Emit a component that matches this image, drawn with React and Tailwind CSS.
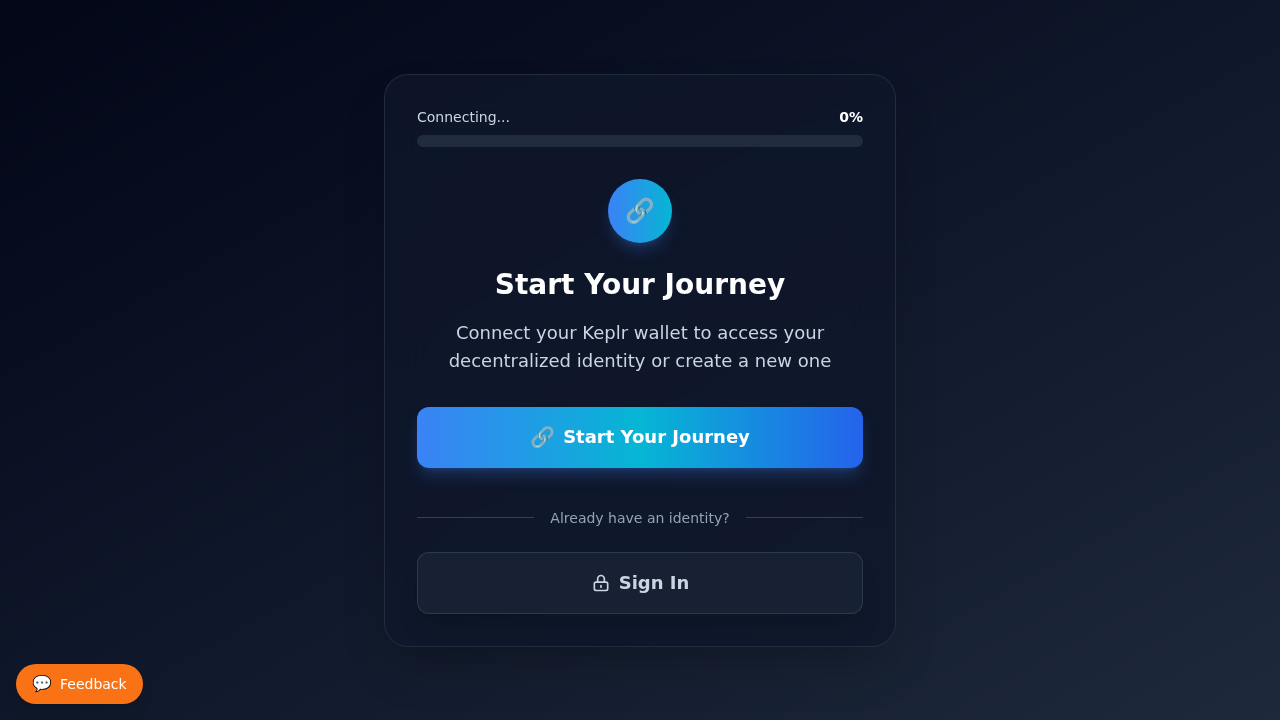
export default function App() {
  return (
    <div className="flex min-h-screen items-center justify-center bg-[linear-gradient(to_bottom_right,#020617,#0f172a,#1e293b)] p-4 font-['DejaVu_Sans',sans-serif]">
      <main className="w-full max-w-lg rounded-3xl border border-[#334155]/50 bg-[#0f172a]/80 p-8 shadow-2xl backdrop-blur-xl">
        <section className="mb-8">
          <div className="mb-2 flex items-center justify-between text-sm">
            <span id="progress-label" className="text-[#cbd5e1]">Connecting...</span>
            <span className="font-bold text-white">0%</span>
          </div>
          <div role="progressbar" aria-labelledby="progress-label" aria-valuenow={0} aria-valuemin={0} aria-valuemax={100} className="h-3 rounded-full bg-[#334155]/50" />
        </section>
        <div className="text-center">
          <div className="mx-auto mb-6 flex size-16 items-center justify-center rounded-full bg-[linear-gradient(to_right,#3b82f6,#06b6d4)] text-2xl shadow-lg shadow-[#3b82f6]/25">🔗</div>
          <h1 className="mb-4 text-[28px] leading-9 font-bold text-white">Start Your Journey</h1>
          <p className="mb-8 text-lg text-[#cbd5e1]">Connect your Keplr wallet to access your decentralized identity or create a new one</p>
        </div>
        <button type="button" className="w-full rounded-xl bg-[linear-gradient(to_right,#3b82f6,#06b6d4,#2563eb)] px-6 py-4 text-lg font-bold text-white shadow-lg shadow-[#3b82f6]/25">
          <span className="flex h-[29px] items-center justify-center">
            <span className="mr-2 text-xl">🔗</span>
            Start Your Journey
          </span>
        </button>
        <div className="mt-10 mb-6 flex items-center gap-4 text-sm text-[#94a3b8]">
          <span className="h-px flex-1 bg-[#334155]" />
          Already have an identity?
          <span className="h-px flex-1 bg-[#334155]" />
        </div>
        <button type="button" className="flex h-[62px] w-full items-center justify-center gap-2 rounded-xl border border-[#334155]/80 bg-[#182033] text-lg font-bold text-[#cbd5e1] shadow-xl">
          <svg className="size-5" viewBox="0 0 24 24" fill="none" stroke="currentColor" strokeWidth="2" aria-hidden="true"><path d="M12 15v2m-6 4h12a2 2 0 002-2v-6a2 2 0 00-2-2H6a2 2 0 00-2 2v6a2 2 0 002 2zm10-10V7a4 4 0 00-8 0v4h8z" strokeLinecap="round" strokeLinejoin="round" /></svg>
          Sign In
        </button>
      </main>
      <button type="button" className="fixed bottom-4 left-4 flex h-10 items-center gap-2 rounded-full bg-[#f97316] px-4 text-sm text-white shadow-lg">
        <span className="text-base">💬</span>
        Feedback
      </button>
    </div>
  );
}
